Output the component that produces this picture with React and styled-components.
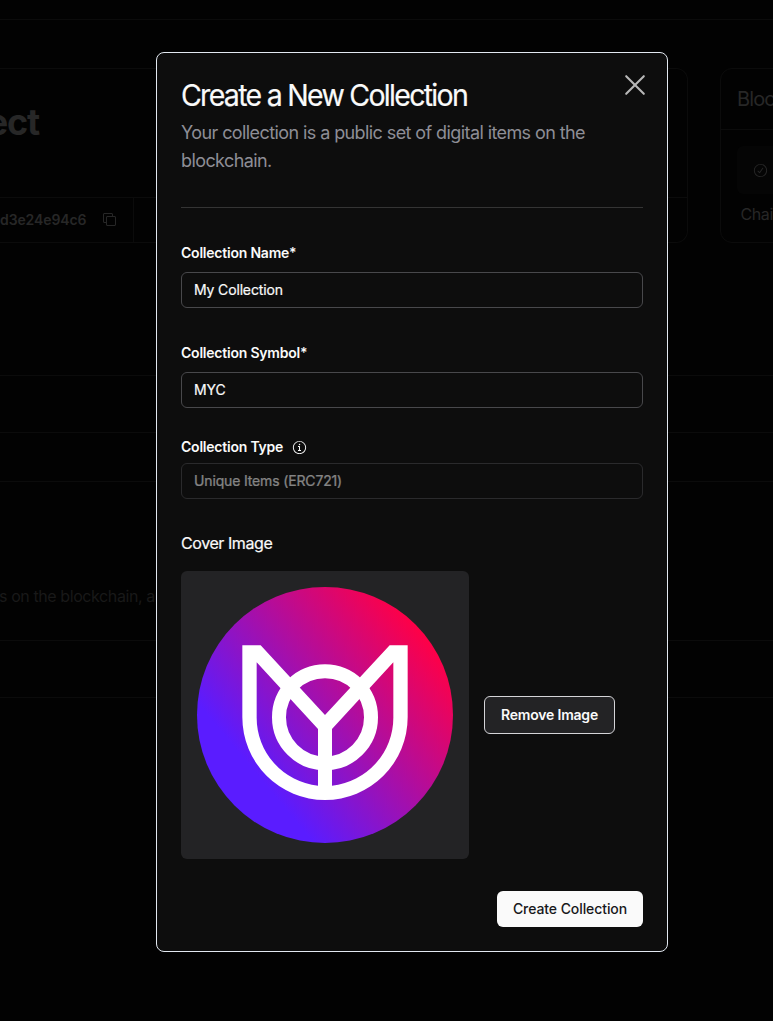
import React from "react";
import styled, { createGlobalStyle } from "styled-components";
import { RxInfoCircled, RxCopy, RxCheckCircled } from "react-icons/rx";

const GlobalStyle = createGlobalStyle`
  *, *::before, *::after { box-sizing: border-box; }
  html, body { margin: 0; background: #020202; }
  body {
    font-family: Inter, "Liberation Sans", sans-serif;
    -webkit-font-smoothing: antialiased;
    overflow: hidden;
  }
  h1, h2, h3, p { margin: 0; font-weight: 400; }
  button, input { font: inherit; }
`;

const line = "#0b0b0b";

const Page = styled.div`
  position: relative;
  width: 773px;
  height: 1021px;
  overflow: hidden;
  background: #020202;
  color: #272727;
`;

const TopBar = styled.div`
  height: 20px;
  border-bottom: 1px solid ${line};
`;

const Cards = styled.div`
  display: flex;
  gap: 32px;
  height: 175px;
  margin-top: 48px;
`;

const ProjectCard = styled.section`
  width: 688px;
  flex: none;
  display: flex;
  flex-direction: column;
  border: 1px solid ${line};
  border-left: 0;
  border-radius: 0 12px 12px 0;
`;

const ProjectTitle = styled.h1`
  flex: 1;
  padding-top: 33px;
  margin-left: -13px;
  font-size: 36px;
  line-height: 40px;
  font-weight: 700;
  letter-spacing: -1.2px;
  width: 52px;
  display: flex;
  justify-content: flex-end;
`;

const AddressRow = styled.div`
  height: 45px;
  border-top: 1px solid ${line};
  display: flex;
`;

const Address = styled.div`
  width: 134px;
  padding-bottom: 1px;
  border-right: 1px solid ${line};
  display: flex;
  align-items: center;
  gap: 16px;
  font-size: 14px;
  font-weight: 600;
  letter-spacing: -0.1px;
`;

const ChainCard = styled.section`
  width: 360px;
  flex: none;
  border: 1px solid ${line};
  border-radius: 12px;
`;

const ChainHead = styled.h3`
  height: 61px;
  padding: 16px;
  border-bottom: 1px solid ${line};
  font-size: 20px;
  line-height: 28px;
  letter-spacing: -0.9px;
  white-space: nowrap;
`;

const Status = styled.div`
  height: 48px;
  margin: 16px 16px 8px;
  padding-left: 16px;
  border-radius: 6px;
  background: #050505;
  display: flex;
  align-items: center;
`;

const ChainLabel = styled.p`
  padding-left: 19.5px;
  font-size: 16px;
  line-height: 24px;
  letter-spacing: -0.4px;
  white-space: nowrap;
`;

const Band = styled.div`
  height: ${(p) => p.$height}px;
  border-bottom: 1px solid ${line};
  display: flex;
  align-items: center;
  justify-content: flex-end;
`;

const BandText = styled.p`
  margin-right: auto;
  margin-left: -1px;
  padding-top: 70px;
  font-size: 16px;
  line-height: 24px;
  letter-spacing: -0.41px;
  color: #191919;
  white-space: nowrap;
`;

const Dialog = styled.div`
  position: absolute;
  left: 156px;
  top: 52px;
  width: 512px;
  height: 900px;
  padding: 24px;
  border: 1px solid #e2e8f0;
  border-radius: 8px;
  background: #0d0d0d;
  color: #fafafa;
  display: flex;
  flex-direction: column;
`;

const Header = styled.header`
  height: 131px;
  border-bottom: 1px solid #343434;
`;

const Title = styled.h2`
  margin-left: -0.5px;
  font-size: 30px;
  line-height: 36px;
  letter-spacing: -1.8px;
  transform: scaleX(0.95);
  transform-origin: left;
  -webkit-text-stroke: 0.2px currentColor;
`;

const Description = styled.p`
  margin-top: 6px;
  font-size: 18px;
  line-height: 28px;
  letter-spacing: -0.59px;
  color: #8e8e96;
`;

const CloseButton = styled.button`
  position: absolute;
  right: 21px;
  top: 21px;
  width: 22px;
  height: 22px;
  padding: 0;
  border: 0;
  background: none;
  color: #b7b7b7;
  svg { display: block; }
`;

const Field = styled.label`
  display: flex;
  flex-direction: column;
  gap: ${(p) => p.$gap ?? 8}px;
  margin-top: ${(p) => p.$top}px;
`;

const Label = styled.span`
  display: flex;
  align-items: center;
  gap: 9px;
  height: 20px;
  font-size: 14px;
  line-height: 20px;
  font-weight: 600;
  letter-spacing: -0.22px;
`;

const Input = styled.input`
  width: 100%;
  height: 36px;
  padding: 0 12px 2px;
  border: 1px solid #48484b;
  border-radius: 6px;
  outline: 0;
  background: transparent;
  color: #fafafa;
  font-size: 14px;
  font-weight: 400;
  -webkit-text-stroke: 0.2px currentColor;
  letter-spacing: -0.15px;
  &:disabled { opacity: 0.5; }
`;

const CoverLabel = styled.h3`
  margin-top: 32px;
  font-size: 16px;
  line-height: 24px;
  font-weight: 400;
  -webkit-text-stroke: 0.2px currentColor;
  letter-spacing: -0.42px;
`;

const CoverRow = styled.div`
  display: flex;
  align-items: center;
  gap: 15px;
  margin-top: 16px;
`;

const Cover = styled.div`
  width: 288px;
  height: 288px;
  padding: 16px;
  border-radius: 6px;
  background: #232325;
  svg { display: block; }
`;

const Button = styled.button`
  padding: 0 15px 2px;
  border-radius: 6px;
  font-size: 14px;
  white-space: nowrap;
`;

const RemoveButton = styled(Button)`
  width: 131px;
  height: 38px;
  border: 1px solid #d4d4d8;
  background: #232325;
  color: #fafafa;
  font-weight: 600;
  letter-spacing: -0.2px;
`;

const CreateButton = styled(Button)`
  width: 146px;
  height: 36px;
  border: 0;
  background: #fafafa;
  color: #18181b;
  font-weight: 500;
  letter-spacing: -0.08px;
`;

const Footer = styled.footer`
  display: flex;
  justify-content: flex-end;
  margin-top: 32px;
`;

function CollectionLogo() {
  return (
    <svg width="256" height="256" viewBox="51 51 768 768">
      <defs>
        <linearGradient id="cover" gradientUnits="userSpaceOnUse" x1="226" y1="608" x2="731" y2="189">
          <stop offset="0" stopColor="#5a1cff" />
          <stop offset="1" stopColor="#ff0046" />
        </linearGradient>
      </defs>
      <circle cx="435" cy="435" r="384" fill="url(#cover)" />
      <path
        fill="#fff"
        fillRule="evenodd"
        d="M187 226H242L435 435L629 226H683V442A248 248 0 0 1 187 442ZM230 277V442A205 205 0 0 0 414 647V477ZM640 277L456 477V647A205 205 0 0 0 640 442Z"
      />
      <circle cx="435" cy="442" r="138" fill="none" stroke="#fff" strokeWidth="42" />
    </svg>
  );
}

export default function App() {
  return (
    <Page>
      <GlobalStyle />
      <TopBar />
      <Cards>
        <ProjectCard>
          <ProjectTitle>ect</ProjectTitle>
          <AddressRow>
            <Address>
              <span>d3e24e94c6</span>
              <RxCopy size={15} />
            </Address>
          </AddressRow>
        </ProjectCard>
        <ChainCard>
          <ChainHead>Blockchain</ChainHead>
          <Status>
            <RxCheckCircled size={15} />
          </Status>
          <ChainLabel>Chain</ChainLabel>
        </ChainCard>
      </Cards>
      <Band $height={133} />
      <Band $height={57} />
      <Band $height={49} />
      <Band $height={159}>
        <BandText>s on the blockchain, and</BandText>
      </Band>
      <Band $height={57} />

      <Dialog role="dialog">
        <Header>
          <Title>Create a New Collection</Title>
          <Description>Your collection is a public set of digital items on the blockchain.</Description>
        </Header>
        <CloseButton aria-label="Close">
          <svg width="22" height="22" viewBox="0 0 22 22" fill="none" stroke="currentColor" strokeWidth="2.1" strokeLinecap="round">
            <path d="M2.2 2.2L19.8 19.8M19.8 2.2L2.2 19.8" />
          </svg>
        </CloseButton>
        <Field $top={35} $gap={9}>
          <Label>Collection Name*</Label>
          <Input defaultValue="My Collection" />
        </Field>
        <Field $top={35} $gap={9}>
          <Label>Collection Symbol*</Label>
          <Input defaultValue="MYC" />
        </Field>
        <Field $top={29} $gap={6}>
          <Label>
            Collection Type
            <RxInfoCircled size={15} />
          </Label>
          <Input defaultValue="Unique Items (ERC721)" disabled />
        </Field>
        <CoverLabel>Cover Image</CoverLabel>
        <CoverRow>
          <Cover>
            <CollectionLogo />
          </Cover>
          <RemoveButton>Remove Image</RemoveButton>
        </CoverRow>
        <Footer>
          <CreateButton>Create Collection</CreateButton>
        </Footer>
      </Dialog>
    </Page>
  );
}
